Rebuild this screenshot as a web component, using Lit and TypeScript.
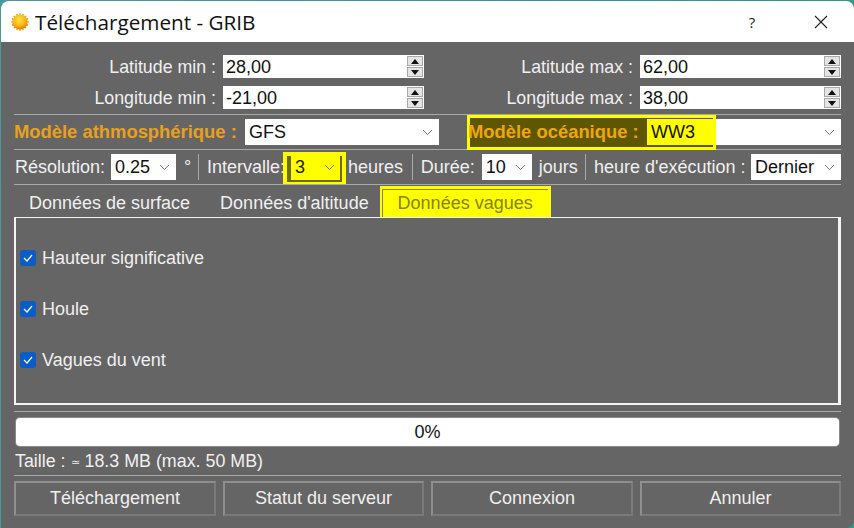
import { LitElement, html, css, svg } from "lit";
import { customElement } from "lit/decorators.js";

const chevron = html`<svg class="chev" width="11" height="7" viewBox="0 0 11 7"><path d="M1 1l4.5 4.5L10 1" fill="none" stroke="#7a7a7a" stroke-width="1"/></svg>`;

const sunSpikes = Array.from({ length: 16 }, (_, i) => {
  const a = (i * Math.PI) / 8;
  const x = 9 + Math.cos(a) * 7.9, y = 9 + Math.sin(a) * 7.9;
  return svg`<circle cx=${x.toFixed(2)} cy=${y.toFixed(2)} r="0.9" fill="#eda32a"/>`;
});

@customElement("app-root")
export class AppRoot extends LitElement {
  static styles = css`
    :host { display: block; width: 854px; height: 528px; overflow: hidden; background: linear-gradient(100deg, #4a9a9c, #3f8fa8 50%, #2f9a86); font-family: "Liberation Sans", Arial, sans-serif; font-size: 18px; color: #f0f0f0; }
    .win { margin-left: 1px; padding-top: 1px; height: 528px; box-sizing: border-box; display: flex; flex-direction: column; }
    .title { flex: 0 0 41px; background: #fff; border-radius: 8px 8px 0 0; display: flex; align-items: center; padding-left: 10px; color: #111; font-family: "Open Sans", sans-serif; font-size: 20.7px; gap: 6px; }
    .title .name { flex: 1; }
    .help { font-size: 15px; width: 30px; color: #222; text-align: center; margin-right: 41px; }
    .close { margin-right: 26px; display: block; }
    .body { flex: 1; background: #656565; border-radius: 0 0 8px 0; padding: 13px 13px 0 13px; display: flex; flex-direction: column; }
    .coords { display: grid; grid-template-columns: 202px 201px 202px 201px; column-gap: 7px; row-gap: 8px; height: 54px; align-items: center; }
    .lbl { text-align: right; white-space: nowrap; font-size: 17.8px; padding-top: 1px; }
    .spin { height: 23px; background: #fff; color: #111; display: flex; align-items: center; padding-left: 3px; }
    .spin .val { flex: 1; padding-top: 2px; }
    .arrows { width: 16px; height: 21px; margin-right: 1px; display: flex; flex-direction: column; gap: 1px; }
    .arrows span { flex: 1; background: #e4e4e4; border: 1px solid #a8a8a8; box-sizing: border-box; display: flex; align-items: center; justify-content: center; }
    .tri-u { width: 0; height: 0; border: 4px solid transparent; border-top: 0; border-bottom: 5px solid #111; }
    .tri-d { width: 0; height: 0; border: 4px solid transparent; border-bottom: 0; border-top: 5px solid #111; }
    .sep { height: 1px; background: #a9a9a9; flex: none; }
    .models { margin-top: 4px; height: 26px; display: flex; align-items: center; font-weight: 700; font-size: 18.4px; color: #e8a020; margin-bottom: 4px; position: relative; }
    .models .ml { width: 231px; box-sizing: border-box; white-space: nowrap; }
    .sel { background: #fff; color: #111; height: 26px; display: flex; align-items: center; justify-content: space-between; padding: 0 6px 0 4px; box-sizing: border-box; font-weight: 400; font-size: 18px; flex: none; }
    .models .sel { width: 194px; }
    .hl { position: absolute; left: 453px; top: -4px; width: 249px; height: 35px; box-sizing: border-box; border: 3px solid #ffff00; background: #5f5700; }
    .oc { position: relative; margin-left: 28px; display: flex; align-items: center; }
    .oc .ol { width: 179px; white-space: nowrap; color: #eea60e; margin-left: 1px; }
    .oc .sel.ww { background: linear-gradient(90deg, #ffff00 69px, #fff 69px); }
    .opts { margin-top: 4px; height: 26px; display: flex; align-items: center; margin-bottom: 4px; white-space: nowrap; }
    .vbar { width: 1px; height: 26px; background: #a9a9a9; flex: none; }
    .r1 { margin: 0 7px 0 1px; width: 89px; }
    .deg { margin: 0 7px 0 8px; width: 7px; }
    .r2 { margin-left: 8px; width: 76px; }
    .r3 { width: 57px; }
    .r4 { margin: 0 8px; }
    .r5 { margin-right: 8px; width: 53px; }
    .r6 { margin: 0 7px; width: 40px; }
    .r7 { margin: 0 7px 0 8px; width: 150px; }
    .interval { width: 63px; height: 33px; box-sizing: border-box; background: #ffff00; padding: 4px 4px 3px 4px; flex: none; margin: 2px 2px 0 0; color: #222; }
    .interval > div { height: 26px; box-sizing: border-box; border-left: 4px solid #6f6a00; border-right: 2px solid #6f6a00; border-bottom: 2px solid #6f6a00; display: flex; align-items: center; justify-content: space-between; padding: 0 5px 0 4px; }
    .chev { flex: none; }
    .tabs { height: 32px; display: flex; align-items: center; padding-left: 15px; }
    .tab { white-space: nowrap; padding-top: 4px; }
    .tab.second { margin-left: 30px; }
    .tab.active { margin-left: 11px; width: 171px; height: 31px; box-sizing: border-box; background: #ffff00; color: #86820c; padding: 3px 3px 0 2px; }
    .tab.active div { height: 100%; box-sizing: border-box; border-top: 1px solid #8a8600; border-left: 1px solid #8a8600; text-align: center; line-height: 27px; }
    .panel { height: 188px; box-sizing: border-box; border-top: 1px solid #f4f4f4; border-left: 2px solid #f4f4f4; border-right: 3px solid #f4f4f4; border-bottom: 2px solid #f4f4f4; padding: 27px 4px 0; display: flex; flex-direction: column; gap: 25px; }
    .chk { display: flex; align-items: center; gap: 6px; height: 26px; }
    .box { width: 16px; height: 16px; background: #0b5cc4; border-radius: 3px; display: flex; align-items: center; justify-content: center; flex: none; }
    .prog { margin: 6px 2px 0; height: 28px; background: #fff; border-radius: 4px; color: #111; text-align: center; line-height: 28px; box-shadow: 0 0 0 1px #8a8a8a; flex: none; }
    .sep.s1 { margin-top: 5px; }
    .sep.s2 { margin-top: 6px; }
    .size { height: 29px; line-height: 30px; padding-left: 1px; flex: none; font-size: 17.85px; }
    .approx { font-size: 11px; vertical-align: 1px; }
    .btns { display: grid; grid-template-columns: 202px 201px 202px 201px; column-gap: 7px; margin-top: 5px; }
    .btn { height: 35px; box-sizing: border-box; border: 2px solid; border-color: #8f8f8f #7a7a7a #7a7a7a #8f8f8f; text-align: center; line-height: 31px; }
  `;

  private spin(v: string) {
    return html`<div class="spin"><span class="val">${v}</span><div class="arrows"><span><i class="tri-u"></i></span><span><i class="tri-d"></i></span></div></div>`;
  }
  private sel(v: string, w: number) {
    return html`<div class="sel" style="width:${w}px"><span>${v}</span>${chevron}</div>`;
  }
  private chk(t: string) {
    return html`<label class="chk"><span class="box"><svg width="10" height="8" viewBox="0 0 10 8"><path d="M1 4l3 3 5-6" fill="none" stroke="#fff" stroke-width="1.2"/></svg></span>${t}</label>`;
  }

  render() {
    return html`<div class="win">
      <div class="title">
        <svg width="18" height="18" viewBox="0 0 18 18">
          <defs><radialGradient id="s" cx="0.45" cy="0.35" r="0.65"><stop offset="0" stop-color="#ffe14a"/><stop offset="0.6" stop-color="#fdb813"/><stop offset="1" stop-color="#e8790f"/></radialGradient></defs>
          ${sunSpikes}<circle cx="9" cy="9" r="7.6" fill="url(#s)"/>
        </svg>
        <span class="name">Téléchargement - GRIB</span>
        <span class="help">?</span>
        <svg class="close" width="14" height="14" viewBox="0 0 14 14"><path d="M1 1l12 12M13 1L1 13" stroke="#222" stroke-width="1.1" fill="none"/></svg>
      </div>
      <div class="body">
        <div class="coords">
          <div class="lbl">Latitude min :</div>${this.spin("28,00")}
          <div class="lbl">Latitude max :</div>${this.spin("62,00")}
          <div class="lbl">Longitude min :</div>${this.spin("-21,00")}
          <div class="lbl">Longitude max :</div>${this.spin("38,00")}
        </div>
        <div class="sep s1"></div>
        <div class="models">
          <span class="ml">Modèle athmosphérique :</span>
          <div class="sel"><span>GFS</span>${chevron}</div>
          <div class="hl"></div>
          <div class="oc"><span class="ol">Modèle océanique :</span>
            <div class="sel ww"><span>WW3</span>${chevron}</div>
          </div>
        </div>
        <div class="sep"></div>
        <div class="opts">
          <span class="r1">Résolution:</span>
          ${this.sel("0.25", 65)}
          <span class="deg">°</span>
          <span class="vbar"></span>
          <span class="r2">Intervalle:</span>
          <div class="interval"><div><span>3</span>${chevron}</div></div>
          <span class="r3">heures</span>
          <span class="vbar r4"></span>
          <span class="r5">Durée:</span>
          ${this.sel("10", 50)}
          <span class="r6">jours</span>
          <span class="vbar"></span>
          <span class="r7">heure d'exécution :</span>
          ${this.sel("Dernier", 90)}
        </div>
        <div class="sep"></div>
        <div class="tabs">
          <div class="tab">Données de surface</div>
          <div class="tab second">Données d'altitude</div>
          <div class="tab active"><div>Données vagues</div></div>
        </div>
        <div class="panel">
          ${this.chk("Hauteur significative")}
          ${this.chk("Houle")}
          ${this.chk("Vagues du vent")}
        </div>
        <div class="sep s2"></div>
        <div class="prog">0%</div>
        <div class="size">Taille : <span class="approx">≃</span> 18.3 MB (max. 50 MB)</div>
        <div class="sep"></div>
        <div class="btns">
          <div class="btn">Téléchargement</div>
          <div class="btn">Statut du serveur</div>
          <div class="btn">Connexion</div>
          <div class="btn">Annuler</div>
        </div>
      </div>
    </div>`;
  }
}
